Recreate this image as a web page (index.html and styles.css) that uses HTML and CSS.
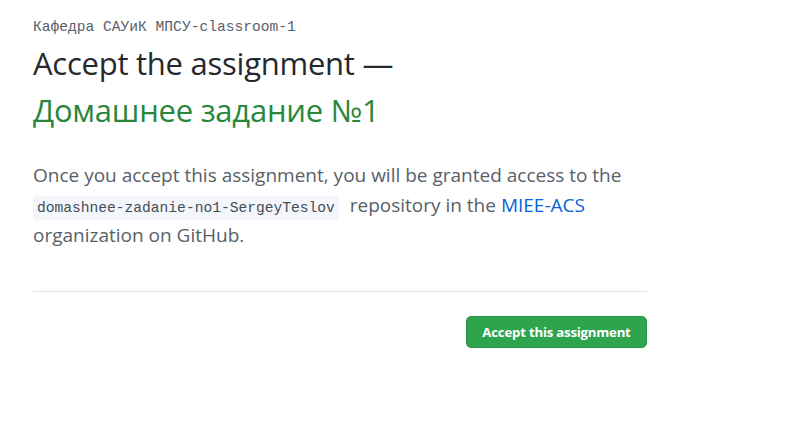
FILE: index.html
```html
<!DOCTYPE html>
<html>
<head>
<meta charset="utf-8">
<link rel="stylesheet" href="styles.css">
</head>
<body>
<div class="page">
  <div class="org">Кафедра САУиК МПСУ-classroom-1</div>
  <h1 class="title">Accept the assignment —<br><span class="name">Домашнее задание №1</span></h1>
  <p class="lead">Once you accept this assignment, you will be granted access to the <code class="repo">domashnee-zadanie-no1-SergeyTeslov</code> repository in the <a class="link" href="#">MIEE-ACS</a> organization on GitHub.</p>
  <div class="actions">
    <button class="btn">Accept this assignment</button>
  </div>
</div>
</body>
</html>
```
FILE: styles.css
```css
html, body { margin: 0; padding: 0; background: #fff; }
body { font-family: "Open Sans", "Noto Sans", sans-serif; }
.page { width: 614px; padding: 17px 0 0 33px; }
.org { font-family: "Liberation Mono", monospace; font-size: 14.6px; color: #586069; line-height: 20px; }
.title { font-weight: 400; font-size: 31px; line-height: 47px; color: #24292e; margin: 0; padding-top: 3px; letter-spacing: -0.25px; }
.name { color: #28873a; }
.lead { font-size: 19px; line-height: 30px; color: #586069; margin: 26px 0 0; padding-bottom: 41px; border-bottom: 1px solid #e1e4e8; }
.repo { font-family: "Liberation Mono", monospace; font-size: 14.6px; line-height: 1; background: #f3f6fa; padding: 4px 4px; border-radius: 3px; color: #444d56; margin-right: 6px; }
.link { color: #0366d6; text-decoration: none; }
.actions { display: flex; justify-content: flex-end; padding-top: 24px; }
.btn { font-family: "Open Sans", sans-serif; font-weight: 700; font-size: 13.2px; color: #fff; background: #2ea44f; border: 1px solid #2a9147; border-radius: 5px; height: 32px; width: 181px; padding: 0; letter-spacing: -0.2px; }
```
